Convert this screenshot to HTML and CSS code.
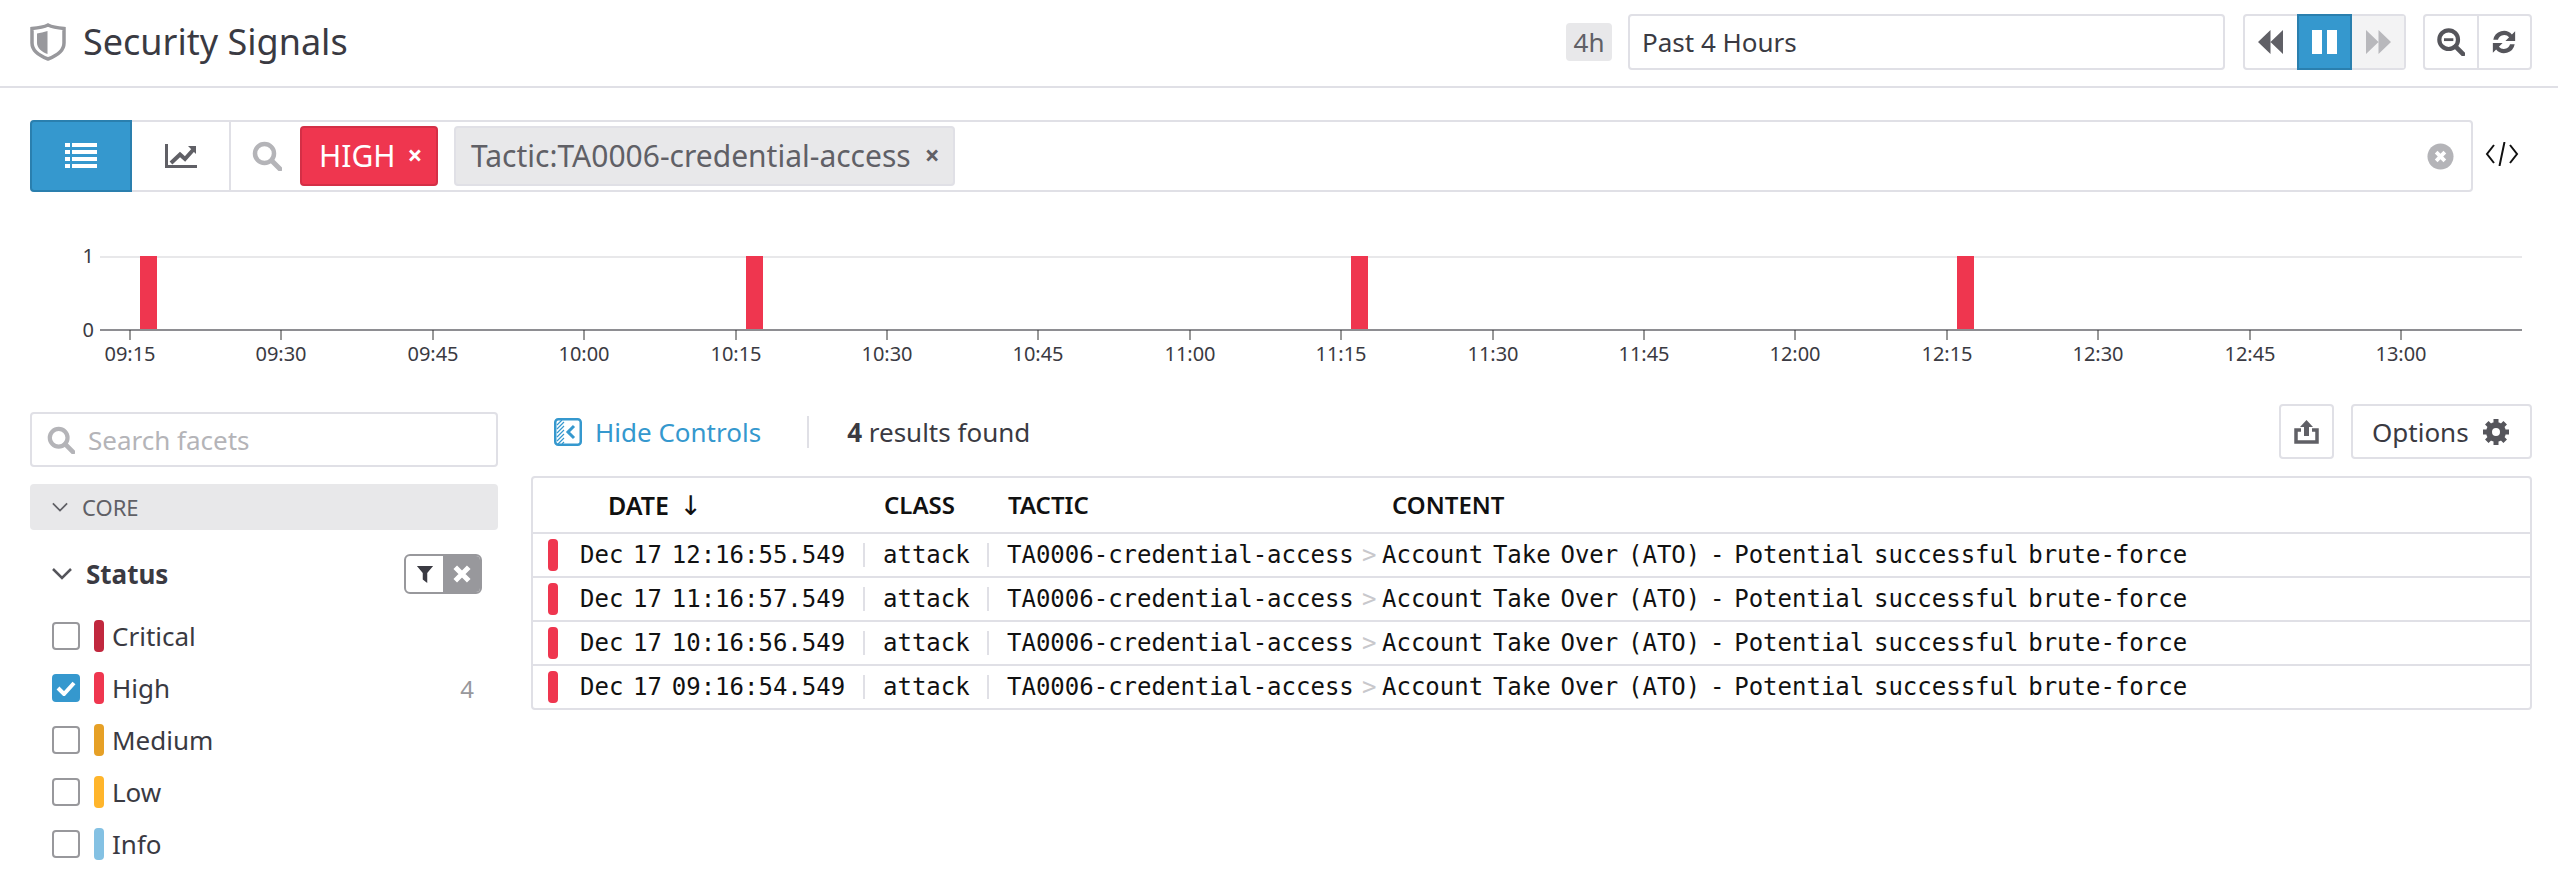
FILE: index.html
```html
<!DOCTYPE html>
<html lang="en">
<head>
  <meta charset="UTF-8" />
  <title>Security Signals</title>
  <link rel="stylesheet" href="styles.css">
</head>
<body>

  <!-- Page header -->
  <header class="top-bar">
    <svg class="shield-icon" viewBox="0 0 36 38" aria-hidden="true">
      <path d="M18 2C22 4 28 5 34 5.500V20C34 28 26 33 18 36C10 33 2 28 2 20V5.500C8 5 14 4 18 2Z" fill="none" stroke="#98989c" stroke-width="3.500"/>
      <path d="M17.500 8C14 9 10 10 7 10.500V20C7 25 12 29 17.500 31Z" fill="#98989c"/>
    </svg>
    <h1 class="page-title">Security Signals</h1>
    <span class="time-badge">4h</span>
    <div class="time-input">Past 4 Hours</div>
    <div class="btn-group playback">
      <span class="btn-cell">
        <svg class="icon-play" viewBox="0 0 25 24" aria-hidden="true"><path d="M12.500 0V24L0 12ZM25 0V24L12.500 12Z" fill="#606066"/></svg>
      </span>
      <span class="btn-cell is-active">
        <svg class="icon-play" viewBox="0 0 25 24" aria-hidden="true"><rect x="0" y="0" width="10" height="24" fill="#fff"/><rect x="15" y="0" width="10" height="24" fill="#fff"/></svg>
      </span>
      <span class="btn-cell is-disabled">
        <svg class="icon-play" viewBox="0 0 25 24" aria-hidden="true"><path d="M0 0V24L12.500 12ZM12.500 0V24L25 12Z" fill="#b8b8bc"/></svg>
      </span>
    </div>
    <div class="btn-group zoom-group">
      <span class="btn-cell">
        <svg class="icon-zoom" viewBox="0 0 30 30" aria-hidden="true"><circle cx="12.500" cy="12.500" r="10" fill="none" stroke="#55555b" stroke-width="4.500"/><path d="M20 20L28 28" stroke="#55555b" stroke-width="5" stroke-linecap="round"/><rect x="7.500" y="11" width="10" height="3" fill="#55555b"/></svg>
      </span>
      <span class="btn-cell">
        <svg class="icon-refresh" viewBox="0 0 28 28" aria-hidden="true"><path d="M2.500 11.500A11.500 11.500 0 0 1 22.500 6L26 2.500V13H15.500L19.500 9A7 7 0 0 0 7.500 11.500ZM25.500 16.500A11.500 11.500 0 0 1 5.500 22L2 25.500V15H12.500L8.500 19A7 7 0 0 0 20.500 16.500Z" fill="#55555b"/></svg>
      </span>
    </div>
  </header>

  <!-- Search row -->
  <div class="query-row">
    <div class="query-bar">
      <span class="view-btn is-active">
        <svg class="list-icon" viewBox="0 0 32 28" aria-hidden="true">
          <rect x="0" y="1" width="5" height="4" fill="#fff"/><rect x="7" y="1" width="25" height="4" fill="#fff"/>
          <rect x="0" y="8" width="5" height="4" fill="#fff"/><rect x="7" y="8" width="25" height="4" fill="#fff"/>
          <rect x="0" y="15" width="5" height="4" fill="#fff"/><rect x="7" y="15" width="25" height="4" fill="#fff"/>
          <rect x="0" y="22" width="5" height="4" fill="#fff"/><rect x="7" y="22" width="25" height="4" fill="#fff"/>
        </svg>
      </span>
      <span class="view-btn">
        <svg class="chart-icon" viewBox="0 0 32 24" aria-hidden="true">
          <path d="M1.500 0V22.500H32" fill="none" stroke="#606066" stroke-width="3"/>
          <path d="M6 19L15 10.500L20 15L28 6" fill="none" stroke="#606066" stroke-width="4"/>
          <path d="M23 2H31V10Z" fill="#606066"/>
        </svg>
      </span>
      <svg class="search-icon" viewBox="0 0 30 30" aria-hidden="true"><circle cx="12.500" cy="12.500" r="9.500" fill="none" stroke="#b4b4b8" stroke-width="4.500"/><path d="M19.500 19.500L28 28" stroke="#b4b4b8" stroke-width="5" stroke-linecap="round"/></svg>
      <span class="chip chip-high">HIGH <span class="chip-x">×</span></span>
      <span class="chip chip-tag">Tactic:TA0006-credential-access <span class="chip-x">×</span></span>
      <svg class="clear-icon" viewBox="0 0 28 28" aria-hidden="true"><circle cx="14" cy="14" r="13.500" fill="#b4b4b8"/><path d="M9.500 9.500L18.500 18.500M18.500 9.500L9.500 18.500" stroke="#fff" stroke-width="4"/></svg>
    </div>
    <svg class="code-icon" viewBox="0 0 34 24" aria-hidden="true"><path d="M9 3L2 12L9 21M25 3L32 12L25 21M19.500 0L14.500 24" fill="none" stroke="#111" stroke-width="2"/></svg>
  </div>

  <!-- Timeline -->
  <svg class="timeline" viewBox="0 0 2558 212" aria-label="Signals over time">
    <line x1="100" y1="65" x2="2522" y2="65" stroke="#e8e8ea" stroke-width="2"/>
    <rect x="140" y="64" width="17" height="74" fill="#ef364f"/>
    <rect x="746" y="64" width="17" height="74" fill="#ef364f"/>
    <rect x="1351" y="64" width="17" height="74" fill="#ef364f"/>
    <rect x="1957" y="64" width="17" height="74" fill="#ef364f"/>
    <line x1="100" y1="138" x2="2522" y2="138" stroke="#8e8e92" stroke-width="2"/>
    <text class="axis-y" x="94" y="71">1</text>
    <text class="axis-y" x="94" y="145">0</text>
    <g id="ticks"></g>
  </svg>

  <div class="content">
    <!-- Facets -->
    <aside class="facets">
      <div class="facet-search">
        <svg class="facet-search-icon" viewBox="0 0 30 30" aria-hidden="true"><circle cx="12.500" cy="12.500" r="9.500" fill="none" stroke="#b4b4b8" stroke-width="4.500"/><path d="M19.500 19.500L28 28" stroke="#b4b4b8" stroke-width="5" stroke-linecap="round"/></svg>
        <span>Search facets</span>
      </div>
      <div class="facet-group">
        <svg class="chevron-small" viewBox="0 0 18 10" aria-hidden="true"><path d="M1 1L9 9L17 1" fill="none" stroke="#606066" stroke-width="2"/></svg>
        <span>CORE</span>
      </div>
      <div class="facet-title">
        <svg class="chevron" viewBox="0 0 20 12" aria-hidden="true"><path d="M1 1L10 10L19 1" fill="none" stroke="#55555b" stroke-width="2.500"/></svg>
        <strong>Status</strong>
        <span class="facet-tools">
          <span class="tool-filter">
            <svg viewBox="0 0 18 20" class="tool-icon" aria-hidden="true"><path d="M0 1H18L11.500 9V20L6.500 16V9Z" fill="#3a3a42"/></svg>
          </span>
          <span class="tool-clear">
            <svg viewBox="0 0 16 16" class="tool-icon" aria-hidden="true"><path d="M2 2L14 14M14 2L2 14" stroke="#fff" stroke-width="4.500"/></svg>
          </span>
        </span>
      </div>
      <ul class="facet-list">
        <li class="facet-item"><span class="check"></span><span class="level level-critical"></span><span class="facet-name">Critical</span></li>
        <li class="facet-item"><span class="check is-checked"><svg viewBox="0 0 20 16" class="check-mark" aria-hidden="true"><path d="M2 8L8 14L18 3" fill="none" stroke="#fff" stroke-width="4"/></svg></span><span class="level level-high"></span><span class="facet-name">High</span><span class="facet-count">4</span></li>
        <li class="facet-item"><span class="check"></span><span class="level level-medium"></span><span class="facet-name">Medium</span></li>
        <li class="facet-item"><span class="check"></span><span class="level level-low"></span><span class="facet-name">Low</span></li>
        <li class="facet-item"><span class="check"></span><span class="level level-info"></span><span class="facet-name">Info</span></li>
      </ul>
    </aside>

    <!-- Results -->
    <main class="results">
      <div class="results-bar">
        <svg class="hide-icon" viewBox="0 0 28 28" aria-hidden="true">
          <rect x="1.250" y="1.250" width="25.500" height="25.500" rx="3" fill="none" stroke="#3598ce" stroke-width="2.500"/>
          <path d="M3 7L8 2M3 11L10 4M3 15L10 8M3 19L10 12M3 23L10 16M4 26L10 20M8 26L10 24" stroke="#3598ce" stroke-width="1.200"/>
          <path d="M20 8L14 14L20 20" fill="none" stroke="#3598ce" stroke-width="3"/>
        </svg>
        <span class="hide-link">Hide Controls</span>
        <span class="bar-divider"></span>
        <span class="result-count"><b>4</b> results found</span>
        <span class="outline-btn share-btn">
          <svg class="share-icon" viewBox="0 0 25 24" aria-hidden="true"><path d="M12.500 0L19 7H15V16H10V7H6Z" fill="#606066"/><path d="M7 10H2V22H23V10H18" fill="none" stroke="#606066" stroke-width="3.500"/></svg>
        </span>
        <span class="outline-btn options-btn">Options
          <svg class="gear-icon" viewBox="0 0 26 26" aria-hidden="true"><circle cx="13" cy="13" r="7" fill="none" stroke="#55555b" stroke-width="6"/><path d="M13 0V6M13 20V26M0 13H6M20 13H26M3.800 3.800L8 8M18 18L22.200 22.200M22.200 3.800L18 8M8 18L3.800 22.200" stroke="#55555b" stroke-width="5"/></svg>
        </span>
      </div>

      <div class="signal-table">
        <div class="table-head">
          <span class="head-date">DATE <span class="sort-arrow">↓</span></span>
          <span class="head-class">CLASS</span>
          <span class="head-tactic">TACTIC</span>
          <span class="head-text">CONTENT</span>
        </div>
        <div class="signal-row">
          <span class="row-level"></span><span class="cell cell-date">Dec 17 12:16:55.549</span><span class="sep"></span><span class="cell cell-class">attack</span><span class="sep"></span><span class="cell cell-tactic">TA0006-credential-access</span><span class="cell cell-arrow">&gt;</span><span class="cell">Account Take Over (ATO) - Potential successful brute-force</span>
        </div>
        <div class="signal-row">
          <span class="row-level"></span><span class="cell cell-date">Dec 17 11:16:57.549</span><span class="sep"></span><span class="cell cell-class">attack</span><span class="sep"></span><span class="cell cell-tactic">TA0006-credential-access</span><span class="cell cell-arrow">&gt;</span><span class="cell">Account Take Over (ATO) - Potential successful brute-force</span>
        </div>
        <div class="signal-row">
          <span class="row-level"></span><span class="cell cell-date">Dec 17 10:16:56.549</span><span class="sep"></span><span class="cell cell-class">attack</span><span class="sep"></span><span class="cell cell-tactic">TA0006-credential-access</span><span class="cell cell-arrow">&gt;</span><span class="cell">Account Take Over (ATO) - Potential successful brute-force</span>
        </div>
        <div class="signal-row">
          <span class="row-level"></span><span class="cell cell-date">Dec 17 09:16:54.549</span><span class="sep"></span><span class="cell cell-class">attack</span><span class="sep"></span><span class="cell cell-tactic">TA0006-credential-access</span><span class="cell cell-arrow">&gt;</span><span class="cell">Account Take Over (ATO) - Potential successful brute-force</span>
        </div>
      </div>
    </main>
  </div>

  <script>
    // Draw the x axis ticks of the timeline
    const labels = ["09:15","09:30","09:45","10:00","10:15","10:30","10:45","11:00","11:15","11:30","11:45","12:00","12:15","12:30","12:45","13:00"];
    const ticks = document.getElementById("ticks");
    const ns = "http://www.w3.org/2000/svg";
    labels.forEach(function (label, i) {
      const x = Math.round(130 + i * 151.4);
      const tick = document.createElementNS(ns, "line");
      tick.setAttribute("x1", x);
      tick.setAttribute("x2", x);
      tick.setAttribute("y1", 138);
      tick.setAttribute("y2", 148);
      tick.setAttribute("stroke", "#333");
      tick.setAttribute("stroke-width", "1");
      ticks.appendChild(tick);
      const text = document.createElementNS(ns, "text");
      text.setAttribute("class", "axis-x");
      text.setAttribute("x", x);
      text.setAttribute("y", 169);
      text.textContent = label;
      ticks.appendChild(text);
    });
  </script>
</body>
</html>
```

FILE: styles.css
```css
* {
  box-sizing: border-box;
}

body {
  margin: 0;
  height: 892px;
  overflow: hidden;
  background: #fff;
  color: #3a3a42;
  font-family: "Noto Sans", Arial, sans-serif;
  font-size: 26px;
}

svg {
  display: block;
  flex: none;
}

/* Page header */
.top-bar {
  display: flex;
  align-items: center;
  height: 88px;
  padding: 0 26px 2px 30px;
  border-bottom: 2px solid #e0e0e6;
}

.shield-icon {
  width: 36px;
  height: 38px;
}

.page-title {
  margin: 0 auto 2px 17px;
  font-size: 36px;
  font-weight: 400;
}

.time-badge {
  display: flex;
  align-items: center;
  justify-content: center;
  width: 46px;
  height: 38px;
  margin-right: 16px;
  border-radius: 4px;
  background: #e8e8ea;
  color: #606066;
  font-size: 26px;
}

.time-input {
  display: flex;
  align-items: center;
  width: 597px;
  height: 56px;
  margin-right: 18px;
  padding-left: 12px;
  border: 2px solid #e0e0e6;
  border-radius: 4px;
  font-size: 26px;
}

.btn-group {
  display: flex;
  height: 56px;
  border: 2px solid #e0e0e6;
  border-radius: 4px;
}

.playback {
  width: 163px;
  margin-right: 17px;
}

.zoom-group {
  width: 109px;
}

.btn-cell {
  display: flex;
  flex: 1;
  align-items: center;
  justify-content: center;
}

.btn-cell.is-active {
  margin: -2px 0;
  border: 2px solid #2a7fae;
  background: #3598ce;
}

.btn-cell.is-disabled {
  background: #f3f3f4;
}

.zoom-group .btn-cell + .btn-cell {
  border-left: 2px solid #e0e0e6;
}

.icon-play {
  width: 25px;
  height: 24px;
}

.icon-zoom {
  width: 28px;
  height: 28px;
}

.icon-refresh {
  width: 26px;
  height: 26px;
}

/* Search row */
.query-row {
  display: flex;
  align-items: center;
  margin: 32px 39px 0 30px;
}

.query-bar {
  display: flex;
  flex: 1;
  align-items: center;
  height: 72px;
  border: 2px solid #e0e0e6;
  border-radius: 4px;
}

.view-btn {
  display: flex;
  align-items: center;
  justify-content: center;
  width: 99px;
  height: 68px;
  border-right: 2px solid #e0e0e6;
}

.view-btn.is-active {
  width: 102px;
  height: 72px;
  margin: -2px 0 -2px -2px;
  border: 2px solid #2a7fae;
  border-radius: 4px 0 0 4px;
  background: #3598ce;
}

.list-icon {
  width: 32px;
  height: 28px;
}

.chart-icon {
  width: 32px;
  height: 24px;
}

.search-icon {
  width: 30px;
  height: 30px;
  margin: 0 18px 0 21px;
}

.chip {
  display: flex;
  align-items: center;
  height: 60px;
  padding-bottom: 2px;
  border: 2px solid #e0e0e6;
  border-radius: 4px;
  font-size: 30px;
}

.chip-x {
  margin-left: 12px;
  font-size: 26px;
  font-weight: 700;
}

.chip-high {
  width: 138px;
  padding-left: 17px;
  border-color: #d42f46;
  background: #ef364f;
  color: #fff;
}

.chip-tag {
  width: 501px;
  margin-left: 16px;
  padding-left: 15px;
  background: #e8e8ea;
  color: #606066;
}

.chip-tag .chip-x {
  margin-left: 14px;
}

.clear-icon {
  width: 27px;
  height: 27px;
  margin-left: auto;
  margin-right: 17px;
}

.code-icon {
  width: 34px;
  height: 24px;
  margin: 0 0 4px 12px;
}

/* Timeline */
.timeline {
  width: 2558px;
  height: 212px;
}

.axis-y {
  fill: #3a3a42;
  font-size: 20px;
  text-anchor: end;
}

.axis-x {
  fill: #3a3a42;
  font-size: 20px;
  text-anchor: middle;
}

/* Facets and results */
.content {
  display: flex;
  gap: 33px;
  padding: 0 26px 0 30px;
}

.facets {
  width: 468px;
  flex: none;
  padding-top: 8px;
}

.facet-search {
  display: flex;
  align-items: center;
  height: 55px;
  padding-left: 15px;
  border: 2px solid #e0e0e6;
  border-radius: 4px;
  color: #b4b4b8;
}

.facet-search-icon {
  width: 28px;
  height: 28px;
  margin-right: 13px;
}

.facet-group {
  display: flex;
  align-items: center;
  height: 46px;
  margin-top: 17px;
  padding-left: 22px;
  border-radius: 4px;
  background: #e8e8ea;
  color: #606066;
  font-size: 22px;
}

.chevron-small {
  width: 16px;
  height: 10px;
  margin-right: 14px;
}

.facet-title {
  display: flex;
  align-items: center;
  height: 40px;
  margin-top: 24px;
  padding: 0 16px 0 22px;
}

.chevron {
  width: 20px;
  height: 12px;
  margin-right: 14px;
}

.facet-title strong {
  font-size: 26px;
}

.facet-tools {
  display: flex;
  width: 78px;
  height: 40px;
  margin-left: auto;
  border: 2px solid #98989c;
  border-radius: 6px;
  overflow: hidden;
}

.tool-filter,
.tool-clear {
  display: flex;
  align-items: center;
  justify-content: center;
  width: 38px;
}

.tool-clear {
  background: #98989c;
}

.tool-icon {
  width: 18px;
  height: 18px;
}

.facet-list {
  margin: 16px 0 0;
  padding: 0 16px 0 22px;
  list-style: none;
}

.facet-item {
  display: flex;
  align-items: center;
  height: 52px;
}

.check {
  display: flex;
  align-items: center;
  justify-content: center;
  width: 28px;
  height: 28px;
  border: 2px solid #98989c;
  border-radius: 4px;
}

.check.is-checked {
  border-color: #3598ce;
  background: #3598ce;
}

.check-mark {
  width: 20px;
  height: 16px;
}

.level {
  width: 10px;
  height: 32px;
  margin: 0 8px 0 14px;
  border-radius: 4px;
}

.level-critical { background: #c1283e; }
.level-high { background: #ef364f; }
.level-medium { background: #e6a026; }
.level-low { background: #ffb52b; }
.level-info { background: #84c1e3; }

.facet-count {
  margin-left: auto;
  padding-right: 8px;
  color: #98989c;
  font-size: 24px;
}

.results {
  flex: 1;
}

.results-bar {
  display: flex;
  align-items: center;
  height: 55px;
}

.hide-icon {
  width: 28px;
  height: 28px;
  margin-left: 23px;
  margin-right: 13px;
}

.hide-link {
  color: #3598ce;
}

.bar-divider {
  width: 2px;
  height: 32px;
  margin: 0 38px 0 46px;
  background: #e0e0e6;
}

.result-count {
  margin-right: auto;
}

.outline-btn {
  display: flex;
  align-items: center;
  height: 55px;
  border: 2px solid #e0e0e6;
  border-radius: 4px;
}

.share-btn {
  justify-content: center;
  width: 55px;
}

.share-icon {
  width: 25px;
  height: 24px;
}

.options-btn {
  width: 181px;
  margin-left: 17px;
  padding-left: 19px;
}

.gear-icon {
  width: 26px;
  height: 26px;
  margin-left: 14px;
}

/* Signal table */
.signal-table {
  margin-top: 17px;
  border: 2px solid #e0e0e6;
  border-radius: 4px;
}

.table-head {
  display: flex;
  align-items: center;
  height: 54px;
  padding-left: 75px;
  color: #111;
  font-size: 24px;
  font-weight: 600;
}

.table-head span {
  padding-bottom: 1px;
}

.head-date {
  width: 276px;
  font-size: 25px;
}

.sort-arrow {
  margin-left: 4px;
  font-family: "DejaVu Sans", sans-serif;
  font-size: 27px;
  font-weight: 400;
}

.head-class {
  width: 124px;
}

.head-tactic {
  width: 384px;
}

.signal-row {
  display: flex;
  align-items: center;
  height: 44px;
  padding-left: 15px;
  border-top: 2px solid #e0e0e6;
  color: #111;
  font-family: "DejaVu Sans Mono", "Liberation Mono", monospace;
  font-size: 24px;
  word-spacing: -4.700px;
  white-space: nowrap;
}

.cell {
  padding-bottom: 1px;
}

.row-level {
  width: 10px;
  height: 32px;
  border-radius: 4px;
  background: #ef364f;
}

.cell-date {
  width: 283px;
  margin-left: 22px;
}

.sep {
  width: 2px;
  height: 24px;
  background: #e0e0e6;
}

.cell-class {
  width: 104px;
  margin-left: 18px;
}

.cell-tactic {
  width: 355px;
  margin-left: 18px;
}

.cell-arrow {
  width: 20px;
  color: #c8c8cc;
}
```
